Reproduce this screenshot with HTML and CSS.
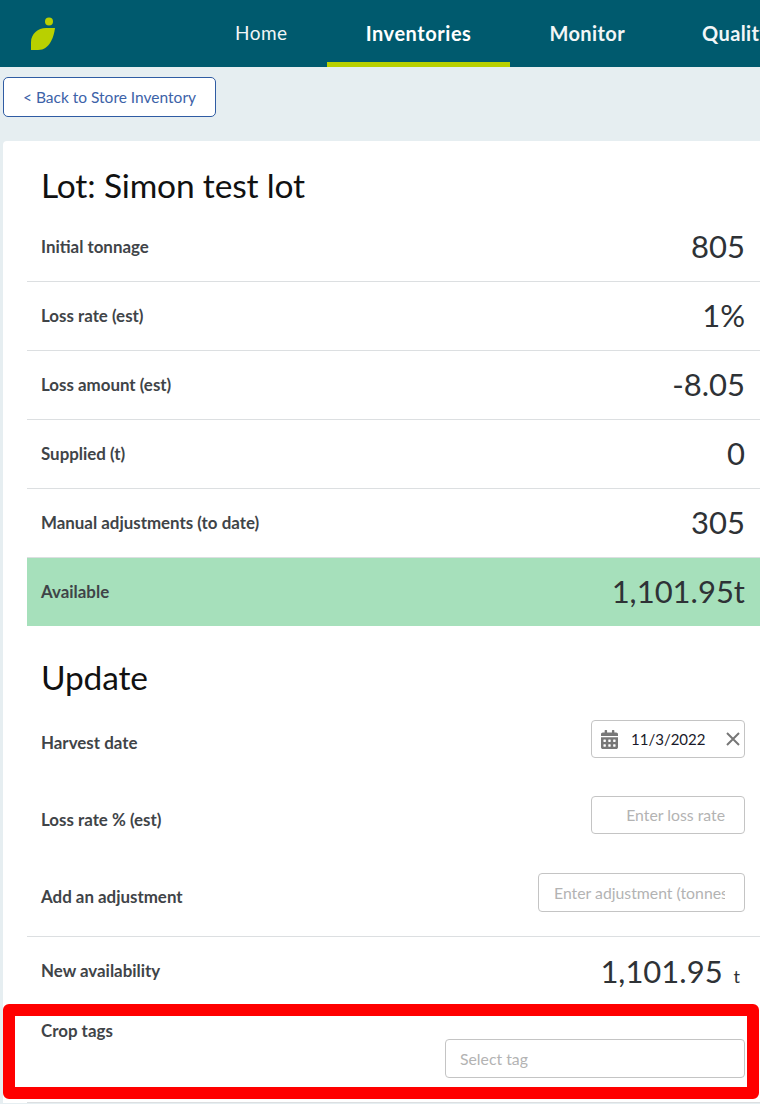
FILE: index.html
```html
<!DOCTYPE html>
<html lang="en">
<head>
  <meta charset="UTF-8">
  <meta name="viewport" content="width=device-width, initial-scale=1.0">
  <title>Lot: Simon test lot</title>
  <link rel="stylesheet" href="styles.css">
</head>
<body>
  <header class="topbar">
    <div class="logo">
      <svg width="26" height="36" viewBox="0 0 26 36" aria-hidden="true">
        <path fill="#b9d000" d="M1 33 L1 25 C1 17 8 11 16 11 L25 11 C24 19 20 33 8 33 Z"/>
        <circle fill="#b9d000" cx="19" cy="4.500" r="4"/>
      </svg>
    </div>
    <nav class="nav">
      <a class="nav-item">Home</a>
      <a class="nav-item active">Inventories</a>
      <a class="nav-item strong">Monitor</a>
      <a class="nav-item strong">Quality</a>
    </nav>
  </header>

  <main>
    <button class="back-button">&lt; Back to Store Inventory</button>

    <section class="card">
      <h2>Lot: Simon test lot</h2>

      <div class="stat-row"><span class="label">Initial tonnage</span><span class="value">805</span></div>
      <div class="stat-row"><span class="label">Loss rate (est)</span><span class="value">1%</span></div>
      <div class="stat-row"><span class="label">Loss amount (est)</span><span class="value">-8.05</span></div>
      <div class="stat-row"><span class="label">Supplied (t)</span><span class="value">0</span></div>
      <div class="stat-row"><span class="label">Manual adjustments (to date)</span><span class="value">305</span></div>
      <div class="stat-row available"><span class="label">Available</span><span class="value">1,101.95t</span></div>

      <h2 class="update-title">Update</h2>

      <div class="form-row first">
        <label class="label">Harvest date</label>
        <div class="date-input">
          <svg width="17" height="19" viewBox="0 0 448 512" preserveAspectRatio="none" aria-hidden="true">
            <path fill="#777" d="M0 464c0 26.500 21.500 48 48 48h352c26.500 0 48-21.500 48-48V192H0v272zm320-196c0-6.600 5.400-12 12-12h40c6.600 0 12 5.400 12 12v40c0 6.600-5.400 12-12 12h-40c-6.600 0-12-5.400-12-12v-40zm0 128c0-6.600 5.400-12 12-12h40c6.600 0 12 5.400 12 12v40c0 6.600-5.400 12-12 12h-40c-6.600 0-12-5.400-12-12v-40zM192 268c0-6.600 5.400-12 12-12h40c6.600 0 12 5.400 12 12v40c0 6.600-5.400 12-12 12h-40c-6.600 0-12-5.400-12-12v-40zm0 128c0-6.600 5.400-12 12-12h40c6.600 0 12 5.400 12 12v40c0 6.600-5.400 12-12 12h-40c-6.600 0-12-5.400-12-12v-40zM64 268c0-6.600 5.400-12 12-12h40c6.600 0 12 5.400 12 12v40c0 6.600-5.400 12-12 12H76c-6.600 0-12-5.400-12-12v-40zm0 128c0-6.600 5.400-12 12-12h40c6.600 0 12 5.400 12 12v40c0 6.600-5.400 12-12 12H76c-6.600 0-12-5.400-12-12v-40zM400 64h-48V16c0-8.800-7.200-16-16-16h-32c-8.800 0-16 7.200-16 16v48H160V16c0-8.800-7.200-16-16-16h-32c-8.800 0-16 7.200-16 16v48H48C21.500 64 0 85.500 0 112v48h448v-48c0-26.500-21.500-48-48-48z"/>
          </svg>
          <span class="date-text">11/3/2022</span>
          <svg width="14" height="14" viewBox="0 0 14 14" aria-hidden="true">
            <path stroke="#777" stroke-width="2" fill="none" d="M1 1 L13 13 M13 1 L1 13"/>
          </svg>
        </div>
      </div>

      <div class="form-row loss">
        <label class="label">Loss rate % (est)</label>
        <input class="text-input loss-input" type="text" placeholder="Enter loss rate">
      </div>

      <div class="form-row last">
        <label class="label">Add an adjustment</label>
        <input class="text-input adjust-input" type="text" placeholder="Enter adjustment (tonnes)">
      </div>

      <div class="new-row">
        <span class="label">New availability</span>
        <span class="value">1,101.95 <small class="unit">t</small></span>
      </div>

      <div class="tags-row">
        <label class="label">Crop tags</label>
        <input class="text-input tag-input" type="text" placeholder="Select tag">
      </div>
    </section>
  </main>

  <div class="highlight"></div>
</body>
</html>
```

FILE: styles.css
```css
body {
    font-family: Lato, Arial, sans-serif;
    background-color: #e6eef1;
    margin: 0;
    padding: 0;
    height: 1104px;
    overflow: hidden;
    position: relative;
}

.topbar {
    background-color: #005a6e;
    height: 67px;
    display: flex;
    overflow: hidden;
}

.logo {
    width: 196px;
    flex-shrink: 0;
    padding: 17px 0 0 30px;
    box-sizing: border-box;
}

.nav {
    display: flex;
    flex-shrink: 0;
}

.nav-item {
    color: #f2f6f7;
    font-size: 19px;
    font-weight: 400;
    letter-spacing: 0.5px;
    line-height: 66px;
    padding: 0 39px;
    box-sizing: border-box;
    height: 67px;
}

.nav-item.active {
    font-size: 20px;
    font-weight: 700;
    letter-spacing: 0.55px;
    color: #fff;
    border-bottom: 5px solid #b9d000;
}

.nav-item.strong {
    font-size: 20px;
    font-weight: 700;
    letter-spacing: 0.4px;
    padding-right: 38px;
}

.back-button {
    display: block;
    margin: 10px 0 24px 3px;
    width: 213px;
    height: 40px;
    background-color: #fff;
    border: 1px solid #2f5ca3;
    border-radius: 5px;
    color: #3c62a8;
    font-family: Lato, Arial, sans-serif;
    font-size: 15.500px;
    padding: 0;
}

.card {
    margin-left: 3px;
    padding-left: 24px;
    background-color: #fff;
    border-radius: 4px 0 0 0;
}

h2 {
    font-size: 33.500px;
    font-weight: 400;
    letter-spacing: -0.15px;
    line-height: 44px;
    color: #111;
    margin: 0;
    padding: 22px 0 6px 14px;
}

.update-title {
    padding: 29px 0 21px 14px;
}

.label {
    font-size: 16.900px;
    font-weight: 700;
    color: #3f4448;
}

.value {
    font-size: 31px;
    color: #2e3236;
    margin-bottom: 2px;
}

.stat-row {
    height: 69px;
    box-sizing: border-box;
    display: flex;
    justify-content: space-between;
    align-items: center;
    padding: 0 15px 0 14px;
    border-bottom: 1px solid #dcdfe1;
}

.stat-row .label {
    margin-bottom: 2px;
}

.stat-row.available {
    height: 68px;
    background-color: #a6e0bb;
    border-bottom: 0;
}

.form-row {
    display: flex;
    justify-content: space-between;
    align-items: center;
    padding: 0 15px 0 14px;
    margin-bottom: 38px;
}

.form-row .label {
    margin-top: 8px;
}

.form-row.first .label {
    margin-top: 6px;
}

.form-row.loss {
    margin-bottom: 39px;
}

.form-row.last {
    margin-bottom: 0;
    padding-bottom: 24px;
    border-bottom: 1px solid #dcdfe1;
}

.date-input {
    width: 154px;
    height: 38px;
    box-sizing: border-box;
    border: 1px solid #c4c4c4;
    border-radius: 4px;
    display: flex;
    align-items: center;
    padding: 0 4px 0 9px;
}

.date-text {
    font-size: 15px;
    color: #1a1a2a;
    margin: 0 auto 0 13px;
}

.text-input {
    height: 39px;
    box-sizing: border-box;
    border: 1px solid #c4c4c4;
    border-radius: 4px;
    font-family: Lato, Arial, sans-serif;
    font-size: 15.800px;
    padding: 0 19px 0 15px;
    background-color: #fff;
}

.text-input::placeholder {
    color: #b3b3b3;
    opacity: 1;
}

.loss-input {
    width: 154px;
    text-align: right;
    height: 38px;
    padding-bottom: 2px;
}

.adjust-input {
    width: 207px;
}

.new-row {
    height: 70px;
    box-sizing: border-box;
    display: flex;
    justify-content: space-between;
    align-items: center;
    padding: 0 20px 0 14px;
}

.new-row .label {
    margin-bottom: 4px;
}

.unit {
    font-size: 18px;
    margin-left: 3px;
}

.tags-row {
    padding: 16px 15px 24px 14px;
    border-bottom: 1px solid #dcdfe1;
}

.tags-row .label {
    display: block;
    line-height: 16px;
}

.tag-input {
    display: block;
    width: 300px;
    margin-left: auto;
    padding-left: 14px;
}

.highlight {
    position: absolute;
    left: 3px;
    top: 1004px;
    width: 756px;
    height: 95px;
    box-sizing: border-box;
    border: 12px solid #ff0000;
    border-radius: 6px;
}
```
